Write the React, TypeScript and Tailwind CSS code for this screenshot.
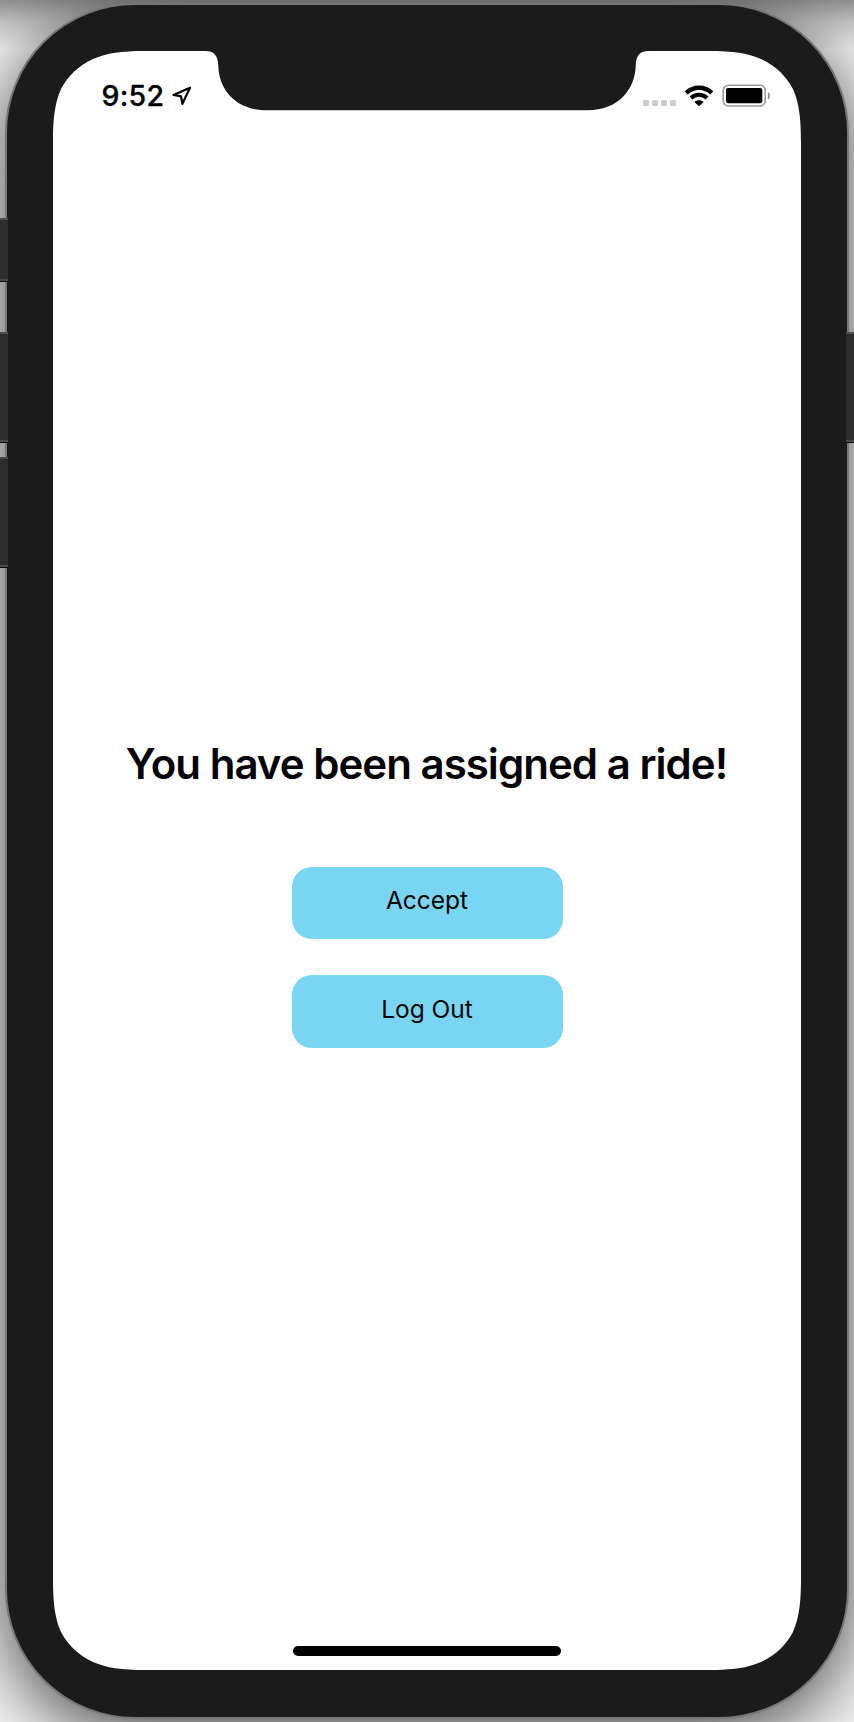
import React from 'react';

function SideButton({ className }: { className: string }) {
  return (
    <div className={`w-full border-y-2 border-[#4b4b4b] bg-[#2d2d2d] shadow-[0_1px_0_#0a0a0a] ${className}`} />
  );
}

function LocationArrow() {
  return (
    <svg className="ml-[8px] h-[20px] w-[20px]" viewBox="0 0 20 20" fill="none">
      <path d="M18 1.8 1.6 9 9 10.3 10.4 17.8Z" stroke="#000" strokeWidth="2.2" strokeLinejoin="round" />
    </svg>
  );
}

function Wifi() {
  return (
    <svg className="h-[22px] w-[30px]" viewBox="0 0 30 22">
      <path d="M2.2 8C9.4 1 20.6 1 27.8 8" fill="none" stroke="#000" strokeWidth="4.3" />
      <path d="M7 13C11.6 8.7 18.4 8.7 23 13" fill="none" stroke="#000" strokeWidth="4" />
      <path d="M15 21.3 10.3 16.9C13 14.6 17 14.6 19.7 16.9Z" fill="#000" />
    </svg>
  );
}

function Battery() {
  return (
    <svg className="h-[24px] w-[49px]" viewBox="0 0 49 24">
      <rect x="1.2" y="1.2" width="42" height="20.8" rx="5.2" fill="none" stroke="#999" strokeWidth="1.6" />
      <rect x="4" y="4" width="36.3" height="15.3" rx="2" fill="#000" />
      <path d="M45.9 8v7.6c3-1.4 3-6.2 0-7.6Z" fill="#999" />
    </svg>
  );
}

function StatusBar() {
  return (
    <header className="flex h-[90px] shrink-0 items-start justify-between pl-[48.5px] pr-[30px] pt-[33px]">
      <div className="flex h-[24px] items-center">
        <span className="text-[28.5px] font-medium leading-[24px] tracking-[0.25px] [-webkit-text-stroke:0.3px_#000]">9:52</span>
        <LocationArrow />
      </div>
      <div className="flex h-[24px] items-center">
        <div className="mr-[8px] mt-[14px] flex gap-[3px]">
          <i className="size-[6px] rounded-[1.5px] bg-[#ccc]" />
          <i className="size-[6px] rounded-[1.5px] bg-[#ccc]" />
          <i className="size-[6px] rounded-[1.5px] bg-[#ccc]" />
          <i className="size-[6px] rounded-[1.5px] bg-[#ccc]" />
        </div>
        <Wifi />
        <div className="ml-[8px]">
          <Battery />
        </div>
      </div>
    </header>
  );
}

function ActionButton({ children, className }: { children: React.ReactNode; className: string }) {
  return (
    <button className={`flex w-[271px] justify-center rounded-[20px] bg-[#7ad5f3] text-[24.5px] leading-[32px] ${className}`}>
      {children}
    </button>
  );
}

export default function App() {
  return (
    <div className="flex h-[1722px] w-[854px] overflow-hidden bg-[linear-gradient(to_bottom,#909090_0px,#c8c8c8_22px,#fafafa_50px)] font-['Inter',sans-serif] text-black">
      <aside className="z-10 -mr-[3px] flex w-[8px] shrink-0 flex-col pt-[218px]">
        <SideButton className="h-[63px]" />
        <SideButton className="mt-[51px] h-[110px]" />
        <SideButton className="mt-[15px] h-[110px]" />
      </aside>
      <div className="mt-[3px] h-[1716px] w-[844px] shrink-0 rounded-[130px] border-2 border-[#777] bg-[#1b1b1b] p-[46px] shadow-[0_16px_80px_rgba(0,0,0,0.75)]">
        <main className="flex h-[1619px] w-[748px] flex-col bg-white [clip-path:path('M0_92C0_66_2_52_8_38C15_25_25_15_40_8C54_2_68_0_92_0L152_0C161_0_165_4_165.3_15C166_38_182_59.3_214_59.3L534_59.3C566_59.3_582_38_582.7_15C583_4_587_0_596_0L656_0C680_0_694_2_708_8C723_15_733_25_740_38C746_52_748_66_748_92L748_1527C748_1553_746_1567_740_1581C733_1594_723_1604_708_1611C694_1617_680_1619_656_1619L92_1619C68_1619_54_1617_40_1611C25_1604_15_1594_8_1581C2_1567_0_1553_0_1527Z')]">
          <StatusBar />
          <section className="flex grow flex-col items-center pt-[597px]">
            <h1 className="mr-px whitespace-nowrap text-[42px] font-semibold leading-[52px] tracking-[-0.97px]">You have been assigned a ride!</h1>
            <div className="mt-[77px] flex flex-col gap-[36px]">
              <ActionButton className="h-[72px] pt-[17px]">Accept</ActionButton>
              <ActionButton className="h-[72.5px] pt-[18px]">Log Out</ActionButton>
            </div>
          </section>
          <div className="mb-[14px] h-[10px] w-[268px] shrink-0 self-center rounded-full bg-black" />
        </main>
      </div>
      <aside className="z-10 -ml-[3px] w-[8px] shrink-0 pt-[332px]">
        <SideButton className="h-[110px]" />
      </aside>
    </div>
  );
}
